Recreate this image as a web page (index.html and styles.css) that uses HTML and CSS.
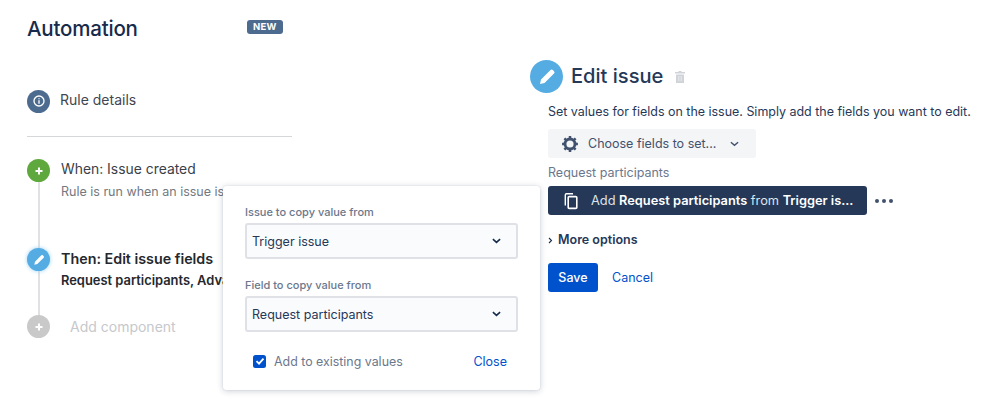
FILE: index.html
```html
<!DOCTYPE html>
<html lang="en">
<head>
<meta charset="utf-8">
<title>Automation</title>
<link rel="stylesheet" href="styles.css">
</head>
<body>
<main class="page">
  <section class="left">
    <header class="head">
      <h1 class="title">Automation</h1>
      <span class="badge">NEW</span>
    </header>
    <div class="details">
      <span class="dot dot-info">
        <svg viewBox="0 0 24 24" width="16" height="16"><circle cx="12" cy="12" r="7.5" fill="none" stroke="#fff" stroke-width="2"/><path d="M12 11v5M12 8v1.2" stroke="#fff" stroke-width="2"/></svg>
      </span>
      <span class="details-text">Rule details</span>
    </div>
    <hr class="rule">
    <ol class="steps">
      <li class="step step-when">
        <span class="dot dot-green"><svg viewBox="0 0 12 12" width="12" height="12"><path d="M6 2.5v7M2.5 6h7" stroke="#fff" stroke-width="2"/></svg></span>
        <div class="step-body">
          <div class="step-title">When: Issue created</div>
          <div class="step-sub">Rule is run when an issue is created</div>
        </div>
      </li>
      <li class="step step-then">
        <span class="dot dot-blue"><svg viewBox="0 0 24 24" width="16" height="16"><path d="M5 19l1-4.5L15.5 5a1.6 1.6 0 0 1 2.3 0l1.2 1.2a1.6 1.6 0 0 1 0 2.3L9.5 18z" fill="#fff"/></svg></span>
        <div class="step-body">
          <div class="step-title strong">Then: Edit issue fields</div>
          <div class="step-sub strong-sub">Request participants, Advanced</div>
        </div>
      </li>
      <li class="step step-add">
        <span class="dot dot-grey"><svg viewBox="0 0 12 12" width="12" height="12"><path d="M6 2.5v7M2.5 6h7" stroke="#fff" stroke-width="2"/></svg></span>
        <div class="add-text">Add component</div>
      </li>
    </ol>
  </section>

  <section class="right">
    <div class="edit-head">
      <span class="dot-large"><svg viewBox="0 0 24 24" width="24" height="24"><path d="M5 19l1-4.500L15.500 5a1.600 1.600 0 0 1 2.300 0l1.200 1.200a1.600 1.600 0 0 1 0 2.300L9.500 18z" fill="#fff"/></svg></span>
      <h2 class="edit-title">Edit issue</h2>
      <svg class="trash" viewBox="0 0 12 14" width="12" height="14"><path d="M4.500 1h3v1H11v1.500H1V2h3.500zM2 4.500h8V13H2z" fill="#d0d3d8"/><path d="M4.500 6v5M6 6v5M7.500 6v5" stroke="#eef0f2" stroke-width=".6"/></svg>
    </div>
    <div class="edit-body">
      <p class="desc">Set values for fields on the issue. Simply add the fields you want to edit.</p>
      <div class="chooser">
        <svg viewBox="0 0 24 24" width="20" height="20"><circle cx="12" cy="12" r="6" fill="none" stroke="#42526e" stroke-width="3.400"/><path d="M12 2.500v3.500M12 18v3.500M2.500 12H6M18 12h3.500M5.300 5.300l2.500 2.500M16.200 16.200l2.500 2.500M5.300 18.700l2.500-2.500M16.200 7.800l2.500-2.500" stroke="#42526e" stroke-width="3"/></svg>
        <span class="chooser-text">Choose fields to set...</span>
        <svg class="chev-small" viewBox="0 0 10 6" width="9" height="6"><path d="M1 1l4 3.500L9 1" fill="none" stroke="#42526e" stroke-width="1.600"/></svg>
      </div>
      <div class="field-label">Request participants</div>
      <div class="value-row">
        <div class="value">
          <svg viewBox="0 0 16 18" width="16" height="18"><path d="M2.300 13.500V3c0-.8.400-1.200 1.200-1.200h6.500" fill="none" stroke="#fff" stroke-width="1.400"/><rect x="5.200" y="4.600" width="8.600" height="11.800" rx="1" fill="none" stroke="#fff" stroke-width="1.600"/></svg>
          <span class="value-text">Add <b>Request participants</b> from <b>Trigger is...</b></span>
        </div>
        <span class="more-dots"><i></i><i></i><i></i></span>
      </div>
      <div class="more-options">
        <svg viewBox="0 0 6 8" width="5" height="7"><path d="M1.200 1l3 3-3 3" fill="none" stroke="#172b4d" stroke-width="1.300"/></svg>
        <span>More options</span>
      </div>
      <div class="actions">
        <button class="save" type="button">Save</button>
        <a class="cancel" href="#">Cancel</a>
      </div>
    </div>
  </section>

  <aside class="popover">
    <label class="pop-label">Issue to copy value from</label>
    <div class="select"><span>Trigger issue</span><svg viewBox="0 0 10 6" width="9" height="6"><path d="M1 1l4 3.500L9 1" fill="none" stroke="#172b4d" stroke-width="1.800"/></svg></div>
    <label class="pop-label second">Field to copy value from</label>
    <div class="select"><span>Request participants</span><svg viewBox="0 0 10 6" width="9" height="6"><path d="M1 1l4 3.500L9 1" fill="none" stroke="#172b4d" stroke-width="1.800"/></svg></div>
    <div class="pop-foot">
      <span class="check"><svg viewBox="0 0 12 12" width="12" height="12"><path d="M2.500 6.200l2.500 2.400 4.500-5" fill="none" stroke="#fff" stroke-width="1.800"/></svg></span>
      <span class="check-text">Add to existing values</span>
      <a class="close" href="#">Close</a>
    </div>
  </aside>
</main>
</body>
</html>
```

FILE: styles.css
```css
* { box-sizing: border-box; }
html, body { margin: 0; height: 100%; background: #fff; }
body { font-family: Inter, "Liberation Sans", sans-serif; color: #172b4d; overflow: hidden; }
.page { position: relative; display: flex; width: 1000px; height: 416px; }

.left { width: 265px; margin-left: 27px; padding-top: 13px; }
.head { display: flex; align-items: center; justify-content: space-between; height: 30px; padding-right: 9px; }
.title { margin: 0; font-size: 20.500px; font-weight: 500; color: #172b4d; letter-spacing: -.2px; }
.badge { background: #4c6b8f; color: #fff; font-size: 9.500px; font-weight: 700; padding: 1px 6.500px; border-radius: 3px; line-height: 12px; letter-spacing: .2px; position: relative; top: -1px; }

.dot { width: 23px; height: 23px; border-radius: 50%; display: flex; align-items: center; justify-content: center; flex: none; position: relative; z-index: 1; }
.dot-info { background: #4c6b8f; }
.dot-green { background: #5fa83d; }
.dot-blue { background: #55ace2; box-shadow: 0 0 4px #9fd2f2; }
.dot-grey { background: #c9c9c9; }

.details { display: flex; align-items: center; gap: 10px; margin-top: 43px; height: 30px; }
.details-text { font-size: 14px; line-height: 18px; margin-bottom: 2px; color: #42464f; }
.rule { margin: 20px 0 0; border: 0; border-top: 1px solid #d5d7da; }

.steps { list-style: none; margin: 22px 0 0; padding: 0; position: relative; }
.steps::before { content: ""; position: absolute; left: 11px; top: 10px; width: 2px; height: 153px; background: #dfe1e4; }
.step { display: flex; gap: 11px; align-items: flex-start; }
.step-when { height: 78px; }
.step-when .step-title { margin: -1px 0 1px; }
.step-then { height: 67px; margin-top: 11px; }
.step-body { min-width: 0; }
.step-title { font-size: 13.900px; line-height: 22px; color: #3a3f48; }
.step-title.strong { font-size: 14.300px; font-weight: 600; color: #25282e; }
.step-sub { font-size: 12.500px; line-height: 21px; color: #73797f; white-space: nowrap; }
.strong-sub { font-size: 12.900px; line-height: 22px; font-weight: 600; color: #25282e; }
.add-text { margin: 3px 0 0 9px; font-size: 14px; line-height: 18px; color: #c6c8cc; }

.right { margin-left: 238px; padding-top: 60px; }
.edit-head { display: flex; align-items: center; height: 33px; }
.dot-large { width: 33px; height: 33px; border-radius: 50%; background: #55ace2; display: flex; align-items: center; justify-content: center; }
.edit-title { margin: 0 0 2px 8px; font-size: 20.100px; font-weight: 500; color: #253858; }
.trash { margin-left: 11px; }
.edit-body { margin-left: 18px; }
.desc { margin: 9px 0 0; font-size: 12.460px; line-height: 20px; color: #253858; white-space: nowrap; }
.chooser { display: flex; align-items: center; width: 208px; height: 29px; margin-top: 7px; padding-left: 12px; background: #f4f5f7; border-radius: 3px; color: #42526e; font-size: 12.500px; }
.chooser-text { margin-left: 8px; }
.chev-small { margin-left: 14px; }
.field-label { margin-top: 6px; font-size: 12.500px; line-height: 18px; color: #6b778c; }
.value-row { display: flex; align-items: center; margin-top: 4px; }
.value { display: flex; align-items: center; width: 319px; height: 29px; background: #253858; border-radius: 3px; padding-left: 15px; color: #dfe3ea; font-size: 12.800px; }
.value-text { margin-left: 12px; white-space: nowrap; }
.value-text b { color: #fff; font-weight: 600; }
.more-dots { display: flex; gap: 3px; margin-left: 8px; }
.more-dots i { width: 4px; height: 4px; border-radius: 50%; background: #42526e; }
.more-options { display: flex; align-items: center; gap: 5px; margin-top: 16px; font-size: 12.500px; font-weight: 600; color: #253858; line-height: 18px; }
.actions { display: flex; align-items: center; gap: 14px; margin-top: 14px; }
.save { width: 50px; height: 29px; border: 0; border-radius: 3px; background: #0052cc; color: #fff; font: 500 12.500px Inter, "Liberation Sans", sans-serif; padding: 0; }
.cancel { color: #0052cc; font-size: 12.500px; text-decoration: none; }

.popover { position: absolute; left: 223px; top: 186px; width: 317px; height: 204px; background: #fff; border-radius: 3px; box-shadow: 0 1px 6px rgba(9,30,66,.22), 0 0 1px rgba(9,30,66,.2); padding: 19px 22px 0; }
.pop-label { display: block; font-size: 11px; line-height: 14px; font-weight: 500; color: #6b778c; }
.pop-label.second { margin-top: 19px; }
.select { display: flex; align-items: center; justify-content: space-between; height: 36px; margin-top: 4px; padding: 0 15px 0 5px; background: #fafbfc; border: 2px solid #dfe1e6; border-radius: 3px; font-size: 12.500px; color: #253858; }
.pop-foot { display: flex; align-items: center; margin-top: 21px; padding: 0 11px 0 8px; height: 16px; }
.check { width: 13px; height: 13px; background: #0052cc; border-radius: 2.500px; display: flex; align-items: center; justify-content: center; }
.check-text { margin-left: 8px; font-size: 12.400px; color: #6b778c; flex: 1; }
.close { color: #0052cc; font-size: 12.500px; text-decoration: none; }
```
